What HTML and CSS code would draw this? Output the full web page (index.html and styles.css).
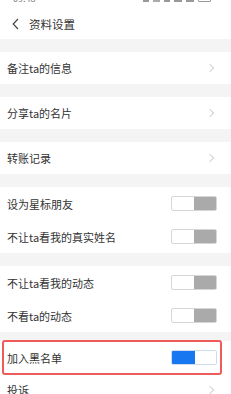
FILE: index.html
```html
<!DOCTYPE html>
<html lang="zh">
<head>
<meta charset="utf-8">
<link rel="stylesheet" href="styles.css">
</head>
<body>
<div class="status">
  <span class="time">09:48</span>
  <span class="icons">
    <span class="ic sq"></span><span class="ic wifi"></span><span class="ic sq2"></span><span class="ic sig"></span><span class="ic sig"></span><span class="ic bat"></span>
  </span>
</div>
<div class="header">
  <svg class="back" width="7" height="12" viewBox="0 0 7 12"><path d="M6 1 L1.2 6 L6 11" fill="none" stroke="#444" stroke-width="1.2"/></svg>
  <span class="title">资料设置</span>
</div>
<div class="gap"></div>
<div class="row nav"><span class="label">备注ta的信息</span><span class="chev"></span></div>
<div class="gap"></div>
<div class="row nav"><span class="label">分享ta的名片</span><span class="chev"></span></div>
<div class="gap"></div>
<div class="row nav"><span class="label">转账记录</span><span class="chev"></span></div>
<div class="gap"></div>
<div class="row"><span class="label">设为星标朋友</span><span class="switch"></span></div>
<div class="row"><span class="label">不让ta看我的真实姓名</span><span class="switch"></span></div>
<div class="gap"></div>
<div class="row"><span class="label">不让ta看我的动态</span><span class="switch"></span></div>
<div class="row"><span class="label">不看ta的动态</span><span class="switch"></span></div>
<div class="gap small"></div>
<div class="row marked"><span class="label">加入黑名单</span><span class="switch on"></span><span class="mark"></span></div>
<div class="row nav"><span class="label">投诉</span><span class="chev"></span></div>
</body>
</html>
```
FILE: styles.css
```css
html, body {
  margin: 0;
  padding: 0;
  background: #fff;
  font-family: "Noto Sans CJK SC", "Noto Sans", sans-serif;
  color: #333;
  overflow: hidden;
}
.status {
  height: 9px;
  overflow: hidden;
  display: flex;
  justify-content: space-between;
  padding: 0 18px 0 13px;
}
.time {
  font-size: 9px;
  line-height: 9px;
  margin-top: -6px;
  color: #777;
}
.icons {
  display: flex;
  gap: 4px;
  margin-top: -4px;
  align-items: flex-start;
  padding-right: 2px;
}
.ic { display: block; background: #999; height: 6px; }
.sq { width: 6px; }
.wifi { width: 7px; background: #aaa; }
.sq2 { width: 6px; }
.sig { width: 8px; }
.bat { width: 11px; background: #fff; border: 1px solid #999; height: 4px; border-radius: 1px; }
.header {
  height: 30px;
  display: flex;
  align-items: center;
  padding-left: 12px;
  gap: 10px;
}
.title {
  font-size: 11.5px;
  color: #333;
}
.gap {
  height: 13px;
  background: #f4f4f4;
}
.gap.small { height: 9px; }
.row {
  height: 33px;
  display: flex;
  align-items: center;
  justify-content: space-between;
  padding: 0 14px 0 7px;
  position: relative;
}
.row.nav { height: 32px; padding-right: 18px; }
.label {
  font-size: 11px;
  color: #333;
}
.chev {
  width: 5px;
  height: 5px;
  border-top: 1px solid #d2d2d2;
  border-right: 1px solid #d2d2d2;
  transform: rotate(45deg);
}
.switch {
  width: 44px;
  height: 13px;
  border: 1px solid #d6d6d6;
  border-radius: 2px;
  background: linear-gradient(to right, #fff 0, #fff 50%, #aaa 50%, #aaa 100%);
}
.switch.on {
  border-color: #cfdcee;
  background: linear-gradient(to right, #1677f0 0, #1677f0 52%, #fff 52%, #fff 100%);
}
.mark {
  position: absolute;
  left: 2px;
  right: 9px;
  top: -1px;
  bottom: -1px;
  border: 2px solid #ee5b5b;
  border-radius: 3px;
  pointer-events: none;
}
```
